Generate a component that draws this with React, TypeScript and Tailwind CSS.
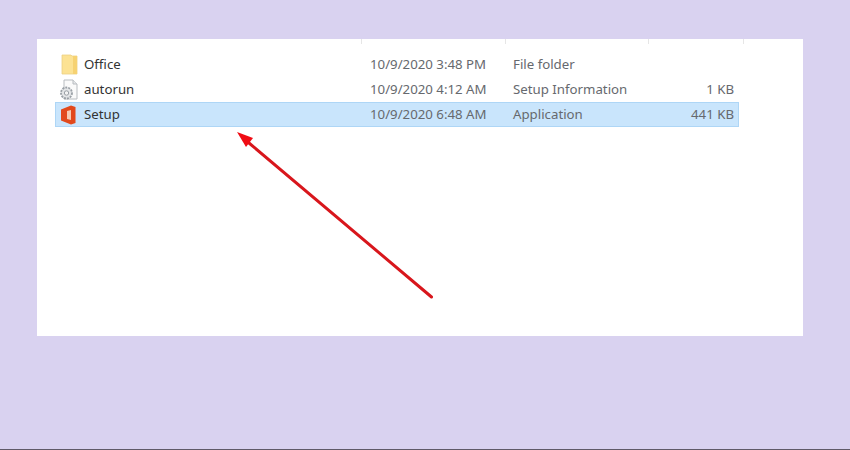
const files = [
  { name: 'Office', date: '10/9/2020 3:48 PM', type: 'File folder', size: '', icon: 'folder' },
  { name: 'autorun', date: '10/9/2020 4:12 AM', type: 'Setup Information', size: '1 KB', icon: 'config' },
  { name: 'Setup', date: '10/9/2020 6:48 AM', type: 'Application', size: '441 KB', icon: 'office' },
]

function FolderIcon() {
  return (
    <svg width="17" height="21" viewBox="0 0 17 21" className="shrink-0 ml-px">
      <path d="M1 1h9l1 1h5v18H1z" fill="#fce293" stroke="#ecd083" strokeWidth="0.8" />
      <rect x="12" y="2" width="4" height="18" fill="#f6d272" />
    </svg>
  )
}

function ConfigIcon() {
  return (
    <svg width="20" height="21" viewBox="0 0 20 21" className="shrink-0 -ml-px">
      <path d="M5 1h9l4 4v15H5z" fill="#fafafa" stroke="#b8bcc0" />
      <path d="M14 1v4h4" fill="#e6e8ea" stroke="#b8bcc0" />
      <circle cx="7.5" cy="14" r="5.5" fill="#e3e5e7" stroke="#9aa0a6" strokeWidth="1.8" strokeDasharray="2 1" />
      <circle cx="7.5" cy="14" r="2.2" fill="#f4f4f4" stroke="#9aa0a6" />
    </svg>
  )
}

function OfficeIcon() {
  return (
    <svg width="17" height="20" viewBox="0 0 17 20" className="shrink-0">
      <path d="M1 4.5 11 0.5 15.5 2v16L11 19.5 1 15.5z" fill="#e2491c" />
      <path d="M7 6 11 5v10l-4-1z" fill="#f6c9b0" />
    </svg>
  )
}

export default function App() {
  return (
    <div className="h-[450px] w-[850px] overflow-hidden bg-[#d9d2f0] border-b border-[#5f5a68] pt-[39px] pl-[37px] font-['Noto_Sans',sans-serif]">
      <div className="relative h-[297px] w-[766px] bg-white">
        {/* column header ticks */}
        <div className="flex h-[13px] pl-[324px]">
          <div className="w-[144px] h-[5px] border-l border-[#e6e6e6]" />
          <div className="w-[143px] h-[5px] border-l border-[#e6e6e6]" />
          <div className="w-[95px] h-[5px] border-l border-[#e6e6e6]" />
          <div className="w-px h-[5px] bg-[#e6e6e6]" />
        </div>

        <div className="w-[684px] ml-[18px]">
          {files.map((f) => (
            <div
              key={f.name}
              className={
                f.icon === 'office'
                  ? 'flex h-[25px] items-center text-[13.25px] bg-[#c9e5fc] border border-[#aed6f6]'
                  : 'flex h-[25px] items-center text-[13.25px] border border-transparent'
              }
            >
              <div className="flex w-[314px] items-center">
                <div className="flex w-[28px] shrink-0 items-center pl-[4px]">
                  {f.icon === 'folder' && <FolderIcon />}
                  {f.icon === 'config' && <ConfigIcon />}
                  {f.icon === 'office' && <OfficeIcon />}
                </div>
                <span className="text-[#333333]">{f.name}</span>
              </div>
              <div className="w-[143px] text-[#66696e]">{f.date}</div>
              <div className="w-[150px] text-[#66696e]">{f.type}</div>
              <div className="w-[71px] text-right text-[#66696e]">{f.size}</div>
            </div>
          ))}
        </div>

        {/* annotation arrow */}
        <svg className="absolute left-0 top-0 pointer-events-none" width="766" height="297" viewBox="0 0 766 297">
          <line x1="394.5" y1="258" x2="212" y2="104" stroke="#d8161c" strokeWidth="3" strokeLinecap="round" />
          <path d="M200 93 L216 99 L209 108 Z" fill="#f00c14" />
        </svg>
      </div>
    </div>
  )
}
